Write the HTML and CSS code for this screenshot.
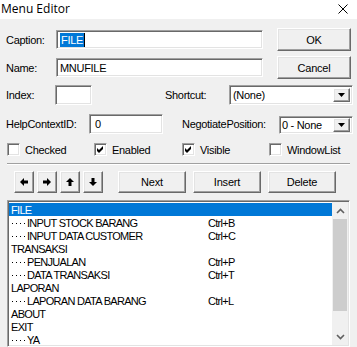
FILE: index.html
```html
<!DOCTYPE html>
<html>
<head>
<meta charset="utf-8">
<title>Menu Editor</title>
<link rel="stylesheet" href="styles.css">
</head>
<body>
<div class="titlebar">
  <span class="title">Menu Editor</span>
  <svg class="close" width="10" height="10" viewBox="0 0 10 10"><path d="M0.5 0.5 L9.5 9.5 M9.5 0.5 L0.5 9.5" stroke="#000" stroke-width="1" fill="none"/></svg>
</div>
<div class="dialog">
  <div class="row r1">
    <span class="lbl w-caption">Caption:</span>
    <div class="field sunken f-caption"><span class="sel">FILE</span></div>
    <div class="btn raised b-ok">OK</div>
  </div>
  <div class="row r2">
    <span class="lbl w-caption">Name:</span>
    <div class="field sunken f-caption">MNUFILE</div>
    <div class="btn raised b-ok">Cancel</div>
  </div>
  <div class="row r3">
    <span class="lbl w-index">Index:</span>
    <div class="field sunken f-index"></div>
    <span class="lbl l-shortcut">Shortcut:</span>
    <div class="combo sunken c-shortcut"><span class="ctext">(None)</span><span class="cbtn raised"><svg width="7" height="4" viewBox="0 0 7 4"><polygon points="0,0 7,0 3.5,4" fill="#000"/></svg></span></div>
  </div>
  <div class="row r4">
    <span class="lbl w-help">HelpContextID:</span>
    <div class="field sunken f-help">0</div>
    <span class="lbl l-neg">NegotiatePosition:</span>
    <div class="combo sunken c-neg"><span class="ctext">0 - None</span><span class="cbtn raised"><svg width="7" height="4" viewBox="0 0 7 4"><polygon points="0,0 7,0 3.5,4" fill="#000"/></svg></span></div>
  </div>
  <div class="row r5">
    <label class="chk k1"><span class="box sunken"></span>Checked</label>
    <label class="chk k2"><span class="box sunken"><svg width="9" height="9" viewBox="0 0 9 9"><polygon points="1,3 3,5 7,1 7,4 3,8 1,6" fill="#000"/></svg></span>Enabled</label>
    <label class="chk k3"><span class="box sunken"><svg width="9" height="9" viewBox="0 0 9 9"><polygon points="1,3 3,5 7,1 7,4 3,8 1,6" fill="#000"/></svg></span>Visible</label>
    <label class="chk k4"><span class="box sunken"></span>WindowList</label>
  </div>
  <div class="sep"></div>
  <div class="row r6">
    <div class="abtn raised"><svg width="8" height="8" viewBox="0 0 8 8"><polygon points="0,4 4,0 4,2.5 8,2.5 8,5.5 4,5.5 4,8" fill="#000"/></svg></div>
    <div class="abtn raised"><svg width="8" height="8" viewBox="0 0 8 8"><polygon points="8,4 4,0 4,2.5 0,2.5 0,5.5 4,5.5 4,8" fill="#000"/></svg></div>
    <div class="abtn raised"><svg width="8" height="8" viewBox="0 0 8 8"><polygon points="4,0 8,4 5.5,4 5.5,8 2.5,8 2.5,4 0,4" fill="#000"/></svg></div>
    <div class="abtn raised"><svg width="8" height="8" viewBox="0 0 8 8"><polygon points="4,8 8,4 5.5,4 5.5,0 2.5,0 2.5,4 0,4" fill="#000"/></svg></div>
    <div class="btn raised b-next">Next</div>
    <div class="btn raised b-ins">Insert</div>
    <div class="btn raised b-del">Delete</div>
  </div>
  <div class="list sunken">
    <div class="items">
      <div class="item selected"><span>FILE</span><span></span></div>
      <div class="item"><span><i class="dots"></i>INPUT STOCK BARANG</span><span>Ctrl+B</span></div>
      <div class="item"><span><i class="dots"></i>INPUT DATA CUSTOMER</span><span>Ctrl+C</span></div>
      <div class="item"><span>TRANSAKSI</span><span></span></div>
      <div class="item"><span><i class="dots"></i>PENJUALAN</span><span>Ctrl+P</span></div>
      <div class="item"><span><i class="dots"></i>DATA TRANSAKSI</span><span>Ctrl+T</span></div>
      <div class="item"><span>LAPORAN</span><span></span></div>
      <div class="item"><span><i class="dots"></i>LAPORAN DATA BARANG</span><span>Ctrl+L</span></div>
      <div class="item"><span>ABOUT</span><span></span></div>
      <div class="item"><span>EXIT</span><span></span></div>
      <div class="item"><span><i class="dots"></i>YA</span><span></span></div>
    </div>
    <div class="vscroll">
      <div class="sarrow"><svg width="9" height="6" viewBox="0 0 9 6"><polyline points="1,5 4.5,1.5 8,5" stroke="#606060" stroke-width="1.6" fill="none"/></svg></div>
      <div class="thumb"></div>
      <div class="track"></div>
      <div class="sarrow"><svg width="9" height="6" viewBox="0 0 9 6"><polyline points="1,1 4.5,4.5 8,1" stroke="#606060" stroke-width="1.6" fill="none"/></svg></div>
    </div>
  </div>
</div>
</body>
</html>
```
FILE: styles.css
```css
* { box-sizing: border-box; }
html, body { margin: 0; padding: 0; }
body {
  width: 357px;
  height: 347px;
  overflow: hidden;
  background: #f0f0f0;
  font-family: "Liberation Sans", Arial, sans-serif;
  font-size: 11px;
  color: #000;
}
.titlebar {
  height: 19px;
  background: #fff;
  display: flex;
  align-items: center;
  justify-content: space-between;
  padding: 0 9px 0 1px;
}
.title {
  font-family: "Open Sans", "Noto Sans", sans-serif;
  font-size: 12px;
  line-height: 14px;
  margin-top: -1px;
}
.close { display: block; margin-top: -2px; }
.dialog { padding: 0 4px 0 6px; }
.row { display: flex; align-items: center; }
.lbl { white-space: nowrap; letter-spacing: -0.3px; }
.sunken {
  border: 1px solid;
  border-color: #a0a0a0 #fff #fff #a0a0a0;
  box-shadow: inset 1px 1px 0 #696969, inset -1px -1px 0 #e3e3e3;
  background: #fff;
}
.raised {
  border: 1px solid;
  border-color: #fff #696969 #696969 #fff;
  box-shadow: inset -1px -1px 0 #a0a0a0, inset 1px 1px 0 #e3e3e3;
  background: #f0f0f0;
}
.field {
  height: 19px;
  display: flex;
  align-items: center;
  padding-left: 4px;
  letter-spacing: -0.3px;
  white-space: nowrap;
}
.btn {
  display: flex;
  align-items: center;
  justify-content: center;
  letter-spacing: -0.2px;
}
.r1 { margin-top: 9px; height: 23px; }
.r2 { margin-top: 5px; height: 23px; }
.w-caption { width: 50px; }
.f-caption { width: 207px; padding-left: 3px; }
.b-ok { width: 74px; height: 23px; margin-left: 14px; }
.sel {
  background: #0078d7;
  color: #fff;
  line-height: 14px;
  padding: 0 1px;
  border-right: 1px solid #000;
}
.r3 { margin-top: 6px; height: 20px; }
.w-index { width: 49px; }
.f-index { width: 37px; height: 20px; }
.l-shortcut { margin-left: 73px; width: 64px; }
.combo {
  height: 20px;
  display: flex;
  align-items: stretch;
  padding: 2px 2px 2px 3px;
  white-space: nowrap;
}
.ctext { flex: 1; display: flex; align-items: center; letter-spacing: -0.3px; }
.cbtn {
  width: 17px;
  display: flex;
  align-items: center;
  justify-content: center;
}
.cbtn svg { display: block; }
.c-shortcut { width: 124px; }
.r4 { margin-top: 9px; height: 20px; }
.w-help { width: 83px; }
.f-help { width: 74px; height: 20px; padding-left: 5px; }
.l-neg { margin-left: 19px; width: 97px; }
.c-neg { width: 74px; height: 18px; align-self: flex-end; padding: 1px 2px 1px 2px; }
.r5 { margin-top: 9px; height: 13px; }
.chk { display: flex; align-items: center; letter-spacing: -0.3px; white-space: nowrap; }
.box {
  width: 13px;
  height: 13px;
  margin-right: 5px;
  display: flex;
  align-items: center;
  justify-content: center;
}
.box svg { display: block; }
.k1 { margin-left: 1px; width: 87px; }
.k2 { width: 88px; }
.k3 { width: 87px; }
.sep {
  margin: 7px 0 0 1px;
  width: 343px;
  height: 2px;
  border-top: 1px solid #a0a0a0;
  border-bottom: 1px solid #fff;
}
.r6 { margin-top: 6px; height: 22px; }
.abtn {
  width: 20px;
  height: 22px;
  margin-right: 3px;
  display: flex;
  align-items: center;
  justify-content: center;
}
.abtn:first-child { margin-left: 8px; }
.abtn svg { display: block; }
.b-next { width: 68px; height: 22px; margin-left: 12px; }
.b-ins { width: 68px; height: 22px; margin-left: 7px; }
.b-del { width: 68px; height: 22px; margin-left: 7px; }
.list {
  margin: 7px 0 0 1px;
  width: 343px;
  height: 147px;
  display: flex;
  padding: 1px;
}
.items { flex: 1; padding-top: 1px; overflow: hidden; }
.item {
  display: grid;
  grid-template-columns: 197px 1fr;
  height: 13px;
  line-height: 15px;
  padding-left: 2px;
  letter-spacing: -0.7px;
  white-space: nowrap;
}
.item.selected { background: #0078d7; color: #fff; }
.dots {
  display: inline-block;
  width: 16px;
  height: 1px;
  vertical-align: 3px;
  background-image: linear-gradient(to right, #000 1px, transparent 1px);
  background-size: 4px 1px;
  background-repeat: repeat-x;
  background-position: 1px 0;
}
.vscroll {
  width: 16px;
  background: #f0f0f0;
  display: flex;
  flex-direction: column;
  padding-top: 1px;
}
.sarrow {
  height: 16px;
  display: flex;
  align-items: center;
  justify-content: center;
}
.sarrow svg { display: block; }
.thumb { height: 92px; background: #cdcdcd; margin: 0 1px; }
.track { flex: 1; }
```
